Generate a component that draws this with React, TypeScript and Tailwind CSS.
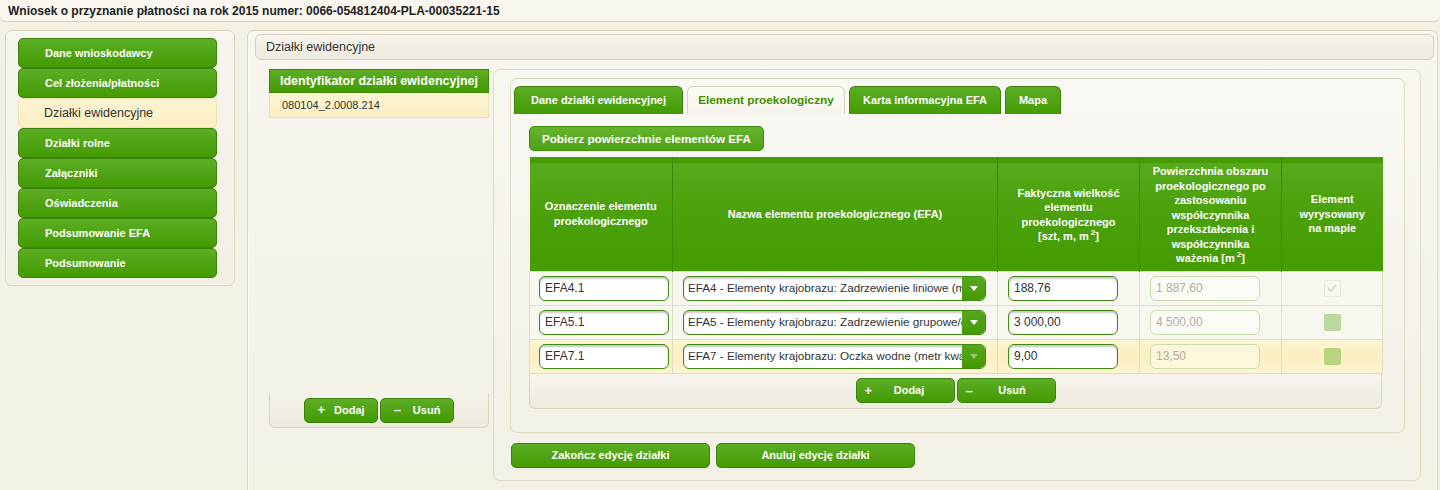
import React from 'react';

const greenBtn =
  'border border-[#3b830c] bg-gradient-to-b from-[#5cad22] to-[#449b00] text-white font-bold text-[11px]';

const navItems = [
  { label: 'Dane wnioskodawcy' },
  { label: 'Cel złożenia/płatności' },
  { label: 'Działki ewidencyjne', active: true },
  { label: 'Działki rolne' },
  { label: 'Załączniki' },
  { label: 'Oświadczenia' },
  { label: 'Podsumowanie EFA' },
  { label: 'Podsumowanie' },
];

const tabs = [
  { label: 'Dane działki ewidencyjnej', w: 'w-[169px]' },
  { label: 'Element proekologiczny', w: 'w-[158px]', active: true },
  { label: 'Karta informacyjna EFA', w: 'w-[152px]' },
  { label: 'Mapa', w: 'w-[56px]' },
];

const rows = [
  {
    code: 'EFA4.1',
    name: 'EFA4 - Elementy krajobrazu: Zadrzewienie liniowe (metr bieżący)',
    size: '188,76',
    area: '1 887,60',
    check: 'done',
  },
  {
    code: 'EFA5.1',
    name: 'EFA5 - Elementy krajobrazu: Zadrzewienie grupowe/oczka wodne (metr kwadratowy)',
    size: '3 000,00',
    area: '4 500,00',
    check: 'a',
  },
  {
    code: 'EFA7.1',
    name: 'EFA7 - Elementy krajobrazu: Oczka wodne (metr kwadratowy)',
    size: '9,00',
    area: '13,50',
    check: 'b',
    highlight: true,
  },
];

function Sq() {
  return <span className="relative -top-[5px] ml-[2px] text-[8px] leading-none">2</span>;
}

function TextInput({ value, className }: { value: string; className: string }) {
  return (
    <div
      className={`flex h-[25px] items-center overflow-hidden whitespace-nowrap rounded-[6px] border border-[#3f8a14] bg-white pl-[5px] text-[12px] text-[#333] shadow-[inset_0_2px_2px_rgba(0,0,0,0.22)] ${className}`}
    >
      {value}
    </div>
  );
}

function Check({ kind }: { kind: string }) {
  if (kind === 'done') {
    return (
      <div className="mx-auto flex h-[17px] w-[17px] items-center justify-center rounded-[2px] border border-[#e8e8de] bg-[#f8f8f2]">
        <svg width="10" height="8" viewBox="0 0 10 8">
          <path d="M1 4.2 L3.8 7 L9 1.2" fill="none" stroke="#cfe0c0" strokeWidth="1.8" />
        </svg>
      </div>
    );
  }
  return (
    <div
      className={`mx-auto h-[17px] w-[17px] rounded-[2px] ${kind === 'a' ? 'bg-[#b9d99e]' : 'bg-[#b8d47c]'}`}
    />
  );
}

export default function App() {
  return (
    <div className="h-[490px] overflow-hidden bg-[#f3f0e4] font-['Liberation_Sans',Arial,sans-serif] text-[#333]">
      <div className="flex h-[22px] items-center rounded-b-[6px] border-b border-[#dcd4bd] bg-[#f8f6ef] pl-[8px] text-[12px] font-bold text-[#222]">
        Wniosek o przyznanie płatności na rok 2015 numer: 0066-054812404-PLA-00035221-15
      </div>

      <div className="mt-[8px] flex items-start pl-[5px]">
        {/* left navigation */}
        <aside className="h-[256px] w-[230px] rounded-[7px] border border-[#ddd5bf] bg-gradient-to-b from-[#f7f5ee] to-[#f2efe3] pl-[12px] pt-[7px] shadow-[inset_0_0_0_1px_#faf9f4]">
          {navItems.map((item) =>
            item.active ? (
              <div
                key={item.label}
                className="flex h-[30px] w-[199px] items-center rounded-[5px] border border-[#f0e3b2] bg-gradient-to-b from-[#fcf3cf] to-[#fbefc3] pl-[25px] text-[12.5px] text-[#333]"
              >
                {item.label}
              </div>
            ) : (
              <div
                key={item.label}
                className={`flex h-[30px] w-[199px] items-center rounded-[5px] pl-[26px] ${greenBtn} text-[11.5px]`}
              >
                {item.label}
              </div>
            ),
          )}
        </aside>

        {/* main panel */}
        <main className="ml-[12px] h-[480px] w-[1191px] rounded-[7px] border border-[#ddd5bf] bg-gradient-to-b from-[#f7f5ee] to-[#f3f0e4] pl-[7px] pr-[3px] pt-[3px] shadow-[inset_0_0_0_1px_#faf9f4]">
          <div className="flex h-[26px] items-center rounded-[6px] border border-[#d9d1ba] bg-gradient-to-b from-[#f7f5ef] to-[#eeeadf] pl-[10px] text-[12.5px] text-[#333]">
            Działki ewidencyjne
          </div>

          <div className="ml-[14px] mt-[9px] flex items-start">
            {/* identifier column */}
            <div className="flex h-[359px] w-[220px] flex-col">
              <div className={`flex h-[24px] items-center justify-center ${greenBtn} border-[#3f8a0a] text-[12.5px]`}>
                Identyfikator działki ewidencyjnej
              </div>
              <div className="flex h-[25px] items-center border border-t-0 border-[#efe2b0] bg-gradient-to-b from-[#fdf5d3] to-[#fcefc2] pl-[12px] text-[11px] text-[#333]">
                080104_2.0008.214
              </div>
              <div className="flex-1" />
              <div className="flex h-[35px] items-center justify-center gap-[2px] rounded-b-[6px] border border-t-0 border-[#dcd4be] bg-gradient-to-b from-[#f5f3ea] to-[#eeeadf]">
                <div className={`flex h-[25px] w-[74px] items-center justify-center gap-[9px] rounded-[5px] ${greenBtn}`}>
                  <span className="text-[13px]">+</span>
                  <span>Dodaj</span>
                </div>
                <div className={`flex h-[25px] w-[74px] items-center justify-center gap-[12px] rounded-[5px] ${greenBtn}`}>
                  <span className="text-[13px]">–</span>
                  <span>Usuń</span>
                </div>
              </div>
            </div>

            {/* detail panel */}
            <div className="ml-[4px] h-[412px] w-[928px] rounded-[7px] border border-[#e0d9c4] bg-gradient-to-b from-[#f8f7f1] to-[#f3f0e5] pl-[16px] pt-[8px]">
              <div className="h-[355px] w-[895px] rounded-[7px] border border-[#e0d9c4] bg-gradient-to-b from-[#f9f8f3] to-[#f3f0e6] pl-[3px] pt-[7px]">
                <div className="flex gap-[4px]">
                  {tabs.map((t) =>
                    t.active ? (
                      <div
                        key={t.label}
                        className={`flex h-[28px] items-center justify-center rounded-t-[6px] border border-b-0 border-[#d9d2bb] bg-gradient-to-b from-[#fbfaf5] to-[#f6f4ec] text-[11.8px] font-bold text-[#3f8f00] ${t.w}`}
                      >
                        {t.label}
                      </div>
                    ) : (
                      <div
                        key={t.label}
                        className={`flex h-[28px] items-center justify-center rounded-t-[6px] border-b-0 ${greenBtn} text-[11.8px] ${t.w}`}
                      >
                        {t.label}
                      </div>
                    ),
                  )}
                </div>

                <div className="pl-[15px]">
                  <div className="mt-[12px] flex h-[25px] w-[235px] items-center justify-center rounded-[5px] border border-[#3f8a0c] bg-gradient-to-b from-[#66b42d] to-[#4fa214] text-[11.7px] font-bold text-white">
                    Pobierz powierzchnie elementów EFA
                  </div>

                  <div className="mt-[6px] w-[853px]">
                    <table className="w-[853px] table-fixed border-collapse">
                      <colgroup>
                        <col className="w-[143px]" />
                        <col className="w-[325px]" />
                        <col className="w-[142px]" />
                        <col className="w-[142px]" />
                        <col className="w-[101px]" />
                      </colgroup>
                      <thead>
                        <tr className="h-[114px] bg-[linear-gradient(to_bottom,#469c02_0,#469c02_6px,#57aa1d_6px,#4ca10c_45%,#459c00_100%)] text-[11px] font-bold leading-[14.5px] text-white">
                          <th className="whitespace-nowrap border-r border-[#3c8a06] align-middle font-bold">
                            Oznaczenie elementu
                            <br />
                            proekologicznego
                          </th>
                          <th className="whitespace-nowrap border-r border-[#3c8a06] align-middle font-bold">
                            Nazwa elementu proekologicznego (EFA)
                          </th>
                          <th className="whitespace-nowrap border-r border-[#3c8a06] pt-[2px] align-middle font-bold">
                            Faktyczna wielkość
                            <br />
                            elementu
                            <br />
                            proekologicznego
                            <br />
                            [szt, m, m<Sq />]
                          </th>
                          <th className="whitespace-nowrap border-r border-[#3c8a06] pt-[2px] align-middle font-bold">
                            Powierzchnia obszaru
                            <br />
                            proekologicznego po
                            <br />
                            zastosowaniu
                            <br />
                            współczynnika
                            <br />
                            przekształcenia i
                            <br />
                            współczynnika
                            <br />
                            ważenia [m<Sq />]
                          </th>
                          <th className="whitespace-nowrap align-middle font-bold">
                            Element
                            <br />
                            wyrysowany
                            <br />
                            na mapie
                          </th>
                        </tr>
                      </thead>
                      <tbody>
                        {rows.map((r) => (
                          <tr
                            key={r.code}
                            className={`h-[34px] ${
                              r.highlight
                                ? 'bg-gradient-to-b from-[#fdf5d6] via-[#fcefc0] to-[#fdf4d2]'
                                : 'bg-[#f7f6ef]'
                            }`}
                          >
                            <td className="border border-[#e3dcc6] pl-[9px] align-middle">
                              <TextInput value={r.code} className="w-[130px]" />
                            </td>
                            <td className="border border-[#e3dcc6] pl-[10px] align-middle">
                              <div className="flex h-[25px] w-[303px] overflow-hidden rounded-[6px] border border-[#3f8a14] bg-white shadow-[inset_0_2px_2px_rgba(0,0,0,0.22)]">
                                <div className="flex flex-1 items-center overflow-hidden whitespace-nowrap pl-[4px] text-[11.7px] text-[#333]">
                                  {r.name}
                                </div>
                                <div className="flex w-[23px] items-center justify-center bg-gradient-to-b from-[#56a81c] to-[#449b00]">
                                  <svg width="8" height="5" viewBox="0 0 8 5">
                                    <path d="M0 0 H8 L4 5 Z" fill={r.highlight ? '#9cc57c' : '#ffffff'} />
                                  </svg>
                                </div>
                              </div>
                            </td>
                            <td className="border border-[#e3dcc6] pl-[10px] align-middle">
                              <TextInput value={r.size} className="w-[110px]" />
                            </td>
                            <td className="border border-[#e3dcc6] pl-[10px] align-middle">
                              <div
                                className={`flex h-[25px] w-[110px] items-center rounded-[6px] border border-[#c7ddb0] pl-[5px] text-[12px] text-[#b3ae9f] ${
                                  r.highlight ? 'bg-[#fdf6da]' : 'bg-[#fbfbf6]'
                                }`}
                              >
                                {r.area}
                              </div>
                            </td>
                            <td className="border border-[#e3dcc6] align-middle">
                              <Check kind={r.check} />
                            </td>
                          </tr>
                        ))}
                      </tbody>
                    </table>
                    <div className="flex h-[35px] items-center justify-center gap-[2px] rounded-b-[6px] border border-t-0 border-[#dcd4be] bg-gradient-to-b from-[#f7f5ee] to-[#efebe0]">
                      <div className={`flex h-[25px] w-[99px] items-center rounded-[5px] ${greenBtn}`}>
                        <span className="ml-[8px] w-[12px] text-[13px]">+</span>
                        <span className="flex-1 pr-[12px] text-center">Dodaj</span>
                      </div>
                      <div className={`flex h-[25px] w-[99px] items-center rounded-[5px] ${greenBtn}`}>
                        <span className="ml-[8px] w-[12px] text-[13px]">–</span>
                        <span className="flex-1 pr-[8px] text-center">Usuń</span>
                      </div>
                    </div>
                  </div>
                </div>
              </div>

              <div className="mt-[10px] flex gap-[6px] pl-[1px]">
                <div className={`flex h-[25px] w-[199px] items-center justify-center rounded-[5px] ${greenBtn} text-[11.5px]`}>
                  Zakończ edycję działki
                </div>
                <div className={`flex h-[25px] w-[199px] items-center justify-center rounded-[5px] ${greenBtn} text-[11.5px]`}>
                  Anuluj edycję działki
                </div>
              </div>
            </div>
          </div>
        </main>
      </div>
    </div>
  );
}
